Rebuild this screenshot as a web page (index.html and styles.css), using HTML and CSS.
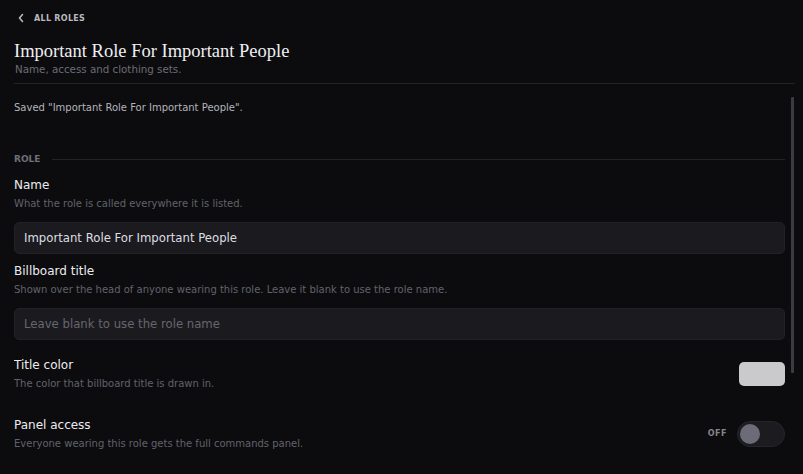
FILE: index.html
```html
<!DOCTYPE html>
<html lang="en">
<head>
  <meta charset="UTF-8">
  <title>Role</title>
  <link rel="stylesheet" href="styles.css">
</head>
<body>

  <header class="top">
    <a class="back" href="#">
      <svg width="8" height="10" viewBox="0 0 8 10"><path d="M5.5 1.5 L2.5 5 L5.5 8.5" fill="none" stroke="#b8b8be" stroke-width="1.6" stroke-linecap="round" stroke-linejoin="round"/></svg>
      <span>ALL ROLES</span>
    </a>
    <h1>Important Role For Important People</h1>
    <p class="sub">Name, access and clothing sets.</p>
  </header>

  <div class="pane">
    <main class="scroll">
      <p class="saved">Saved "Important Role For Important People".</p>

      <div class="section-head"><span>ROLE</span></div>

      <div class="field">
        <label>Name</label>
        <p class="desc">What the role is called everywhere it is listed.</p>
        <input type="text" value="Important Role For Important People">
      </div>

      <div class="field">
        <label>Billboard title</label>
        <p class="desc">Shown over the head of anyone wearing this role. Leave it blank to use the role name.</p>
        <input type="text" placeholder="Leave blank to use the role name">
      </div>

      <div class="row first">
        <div>
          <label>Title color</label>
          <p class="desc">The color that billboard title is drawn in.</p>
        </div>
        <div class="swatch"></div>
      </div>

      <div class="row">
        <div>
          <label>Panel access</label>
          <p class="desc">Everyone wearing this role gets the full commands panel.</p>
        </div>
        <div class="toggle-wrap">
          <span class="off">OFF</span>
          <div class="toggle"><div class="knob"></div></div>
        </div>
      </div>
    </main>

    <div class="scrollbar"><div class="thumb"></div></div>
  </div>

</body>
</html>
```

FILE: styles.css
```css
html, body {
  margin: 0;
  height: 100%;
}

body {
  background: #0c0c0f;
  color: #ececef;
  font-family: "DejaVu Sans", sans-serif;
  display: flex;
  flex-direction: column;
  overflow: hidden;
}

.top {
  margin: 0 8px 0 14px;
  padding-top: 13px;
  border-bottom: 1px solid #232327;
  padding-bottom: 7px;
}

.back {
  display: flex;
  align-items: center;
  gap: 9px;
  height: 10px;
  margin-left: 3px;
  text-decoration: none;
  color: #b8b8be;
  font-size: 8px;
  font-weight: bold;
  letter-spacing: 0.3px;
}

h1 {
  font-family: "Liberation Serif", serif;
  font-weight: normal;
  font-size: 18.5px;
  color: #efeff2;
  margin: 17px 0 0 0;
  line-height: 23px;
}

.sub {
  margin: 0 0 0 1px;
  font-size: 10.3px;
  color: #6c6c74;
  line-height: 13px;
}

.pane {
  flex: 1;
  min-height: 0;
  display: flex;
  gap: 6px;
  margin: 13px 9px 0 14px;
}

.scroll {
  flex: 1;
  overflow: hidden;
}

.scrollbar {
  width: 3px;
}

.thumb {
  height: 276px;
  background: #3b3b41;
  border-radius: 1px;
}

.saved {
  margin: 4px 0 0 0;
  font-size: 10px;
  color: #b4b4ba;
  line-height: 14px;
}

.section-head {
  display: flex;
  align-items: center;
  gap: 12px;
  height: 12px;
  margin-top: 38px;
  font-size: 9px;
  font-weight: bold;
  color: #6f6f77;
}

.section-head::after {
  content: "";
  flex: 1;
  height: 1px;
  background: #232327;
}

.field {
  margin-top: 11px;
}

.field + .field {
  margin-top: 8px;
}

label {
  display: block;
  font-size: 12px;
  line-height: 18px;
  color: #ececef;
}

.desc {
  margin: 3px 0 0 0;
  font-size: 10px;
  line-height: 14px;
  color: #62626a;
}

input {
  display: block;
  box-sizing: border-box;
  width: 100%;
  height: 32px;
  margin-top: 11px;
  padding: 0 9px;
  background: #1b1b1f;
  border: 1px solid #222226;
  border-radius: 5px;
  color: #dedee2;
  font-family: inherit;
  font-size: 11.7px;
  outline: none;
}

input::placeholder {
  color: #66666e;
}

.row {
  display: flex;
  justify-content: space-between;
  align-items: center;
  margin-top: 25px;
}

.row.first {
  margin-top: 16px;
}

.swatch {
  width: 46px;
  height: 24px;
  border-radius: 5px;
  background: #cacacc;
}

.toggle-wrap {
  display: flex;
  align-items: center;
  gap: 10px;
}

.off {
  font-size: 8px;
  font-weight: bold;
  color: #85858c;
  letter-spacing: 0.5px;
}

.toggle {
  width: 48px;
  height: 26px;
  box-sizing: border-box;
  border-radius: 13px;
  background: #1c1c20;
  border: 1px solid #26262a;
  padding: 2px;
}

.knob {
  width: 20px;
  height: 20px;
  border-radius: 50%;
  background: #6c6b78;
}
```
